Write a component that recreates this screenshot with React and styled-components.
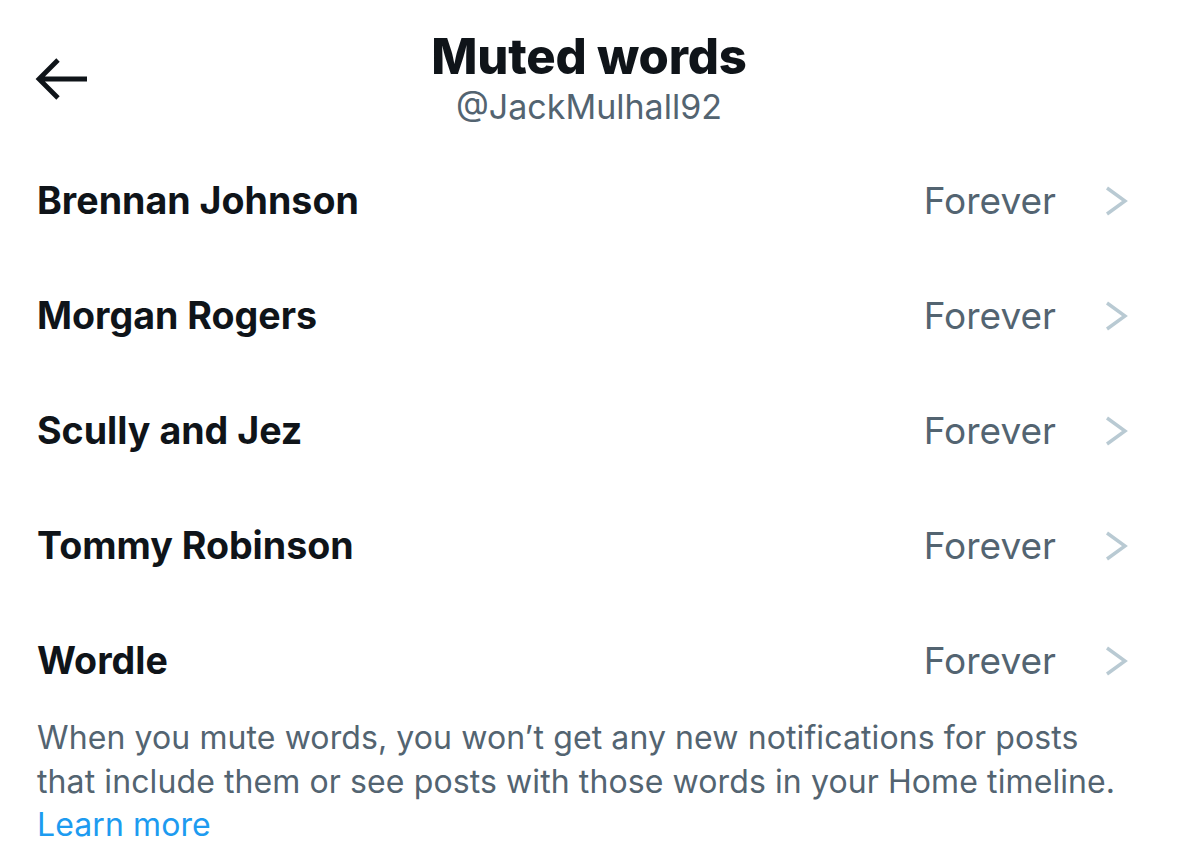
import React from "react";
import styled, { createGlobalStyle } from "styled-components";

const GlobalStyle = createGlobalStyle`
  body {
    margin: 0;
    background: #ffffff;
    font-family: Inter, "Liberation Sans", Arial, sans-serif;
    color: #0f1419;
  }
`;

const words = [
  "Brennan Johnson",
  "Morgan Rogers",
  "Scully and Jez",
  "Tommy Robinson",
  "Wordle"
];

const App = () => {
  return (
    <>
      <GlobalStyle />
      <Page>
        <Header>
          <BackButton aria-label="Back">
            <svg width="54" height="46" viewBox="0 0 54 46" fill="none">
              <path
                d="M52 23H5M23 4L4 23l19 19"
                stroke="#0f1419"
                strokeWidth="4.8"
              />
            </svg>
          </BackButton>
          <TitleBlock>
            <Title>Muted words</Title>
            <Handle>@JackMulhall92</Handle>
          </TitleBlock>
        </Header>

        <List>
          {words.map(word => (
            <Row key={word}>
              <Word>{word}</Word>
              <Duration>Forever</Duration>
              <Chevron width="26" height="30" viewBox="0 0 26 30" fill="none">
                <path
                  d="M3 2l18 13L3 28"
                  stroke="#b9cad3"
                  strokeWidth="3.4"
                />
              </Chevron>
            </Row>
          ))}
        </List>

        <Note>
          When you mute words, you won’t get any new notifications for posts
          that include them or see posts with those words in your Home timeline.
          <LearnMore href="#">Learn more</LearnMore>
        </Note>
      </Page>
    </>
  );
};

export default App;

const Page = styled.div`
  width: 1178px;
  height: 850px;
  overflow: hidden;
  box-sizing: border-box;
  padding: 0 37px;
`;

const Header = styled.header`
  position: relative;
  height: 143px;
  display: flex;
  justify-content: center;
  padding-top: 27px;
  box-sizing: border-box;
`;

const BackButton = styled.button`
  position: absolute;
  left: -2px;
  top: 56px;
  padding: 0;
  border: 0;
  background: none;
  display: flex;
`;

const TitleBlock = styled.div`
  display: flex;
  flex-direction: column;
  align-items: center;
`;

const Title = styled.h1`
  margin: 0;
  font-size: 49px;
  line-height: 60px;
  font-weight: 800;
  letter-spacing: -0.2px;
`;

const Handle = styled.div`
  font-size: 34px;
  line-height: 40px;
  color: #536471;
`;

const List = styled.div`
  display: flex;
  flex-direction: column;
`;

const Row = styled.div`
  height: 115px;
  display: flex;
  align-items: center;
`;

const Word = styled.div`
  flex: 1;
  font-size: 37.6px;
  font-weight: 700;
`;

const Duration = styled.div`
  font-size: 37px;
  color: #536471;
  margin-right: 48px;
`;

const Chevron = styled.svg`
  margin-right: 11px;
`;

const Note = styled.p`
  margin: -2px 0 0;
  font-size: 32px;
  line-height: 43.5px;
  letter-spacing: 0.1px;
  color: #536471;
`;

const LearnMore = styled.a`
  display: block;
  color: #1d9bf0;
  text-decoration: none;
`;
